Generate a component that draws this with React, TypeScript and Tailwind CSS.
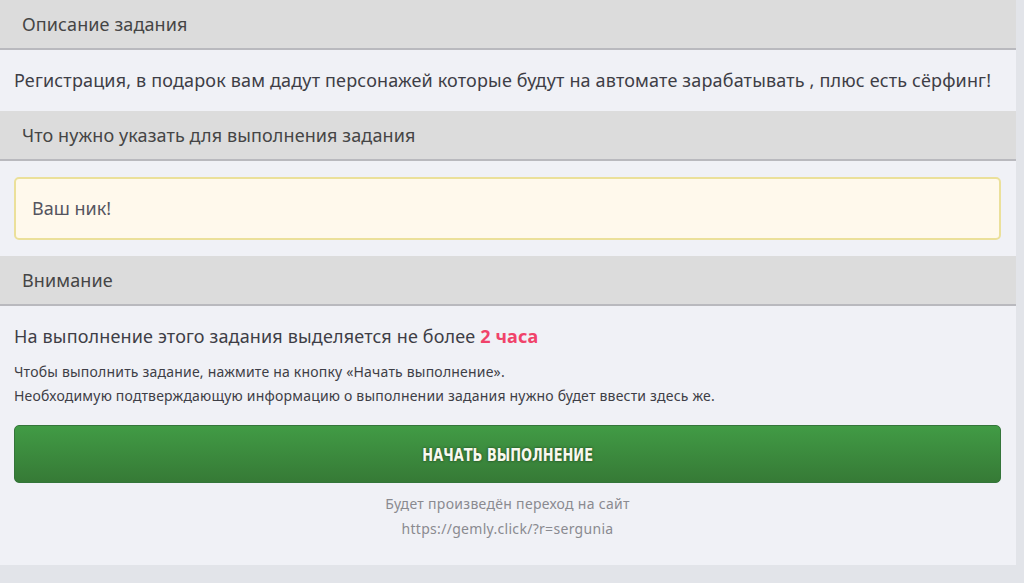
import React from "react";

const font = { fontFamily: '"Noto Sans", "Open Sans", sans-serif' };

function Header({ children }: { children: React.ReactNode }) {
  return (
    <div className="h-[50px] bg-[#dcdcdc] border-b-2 border-[#b9b9be] flex items-center pl-[22px] text-[18px] tracking-[0.1px] text-[#454545]">
      {children}
    </div>
  );
}

export default function App() {
  return (
    <div className="w-[1024px] h-[583px] bg-[#e2e4e9] overflow-hidden" style={font}>
      <div className="w-[1016px] h-[565px] bg-[#f0f1f6] flex flex-col">
        <Header>Описание задания</Header>
        <div className="h-[61px] flex items-center pl-[14px] text-[18px] text-[#3e3e46] tracking-[0.16px]">
          Регистрация, в подарок вам дадут персонажей которые будут на автомате зарабатывать , плюс есть сёрфинг!
        </div>
        <Header>Что нужно указать для выполнения задания</Header>
        <div className="pt-[16px] pb-[16px] px-[14px]">
          <div className="h-[63px] w-[987px] bg-[#fff9ec] border-2 border-[#ebe09a] rounded-[5px] flex items-center pl-[16px] text-[18px] text-[#555560]">
            Ваш ник!
          </div>
        </div>
        <Header>Внимание</Header>
        <div className="px-[14px] pt-[18px]">
          <div className="text-[18px] text-[#3e3e46] leading-[24px] tracking-[0.15px]">
            На выполнение этого задания выделяется не более{" "}
            <span className="font-bold text-[#f0436a]">2 часа</span>
          </div>
          <div className="mt-[12px] text-[14px] text-[#3e3e46] leading-[24px] tracking-[0.2px]">
            <div>Чтобы выполнить задание, нажмите на кнопку «Начать выполнение».</div>
            <div>Необходимую подтверждающую информацию о выполнении задания нужно будет ввести здесь же.</div>
          </div>
          <div
            className="mt-[17px] h-[58px] w-[987px] rounded-[5px] bg-gradient-to-b from-[#419b45] to-[#367a36] border border-[#34753a] flex items-center justify-center text-[18px] font-bold text-[#f8f8ee]"
            style={{ fontFamily: '"DejaVu Sans Condensed", "Liberation Sans Narrow", sans-serif', textShadow: "0 0 3px rgba(0,0,0,0.6)" }}
          >
            <span className="inline-block scale-x-[0.8]">НАЧАТЬ ВЫПОЛНЕНИЕ</span>
          </div>
          <div className="mt-[8px] text-center text-[14px] tracking-[0.3px] text-[#8a8a90] leading-[25px] w-[987px]">
            <div>Будет произведён переход на сайт</div>
            <div>https://gemly.click/?r=sergunia</div>
          </div>
        </div>
      </div>
    </div>
  );
}
